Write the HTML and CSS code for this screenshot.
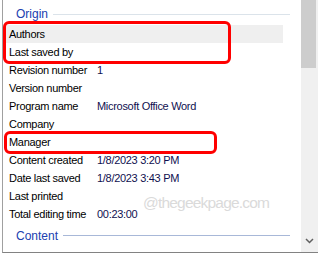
FILE: index.html
```html
<!DOCTYPE html>
<html lang="en">

<head>
    <meta charset="UTF-8">
    <title>Properties</title>
    <link rel="stylesheet" href="styles.css">
</head>

<body>
    <div class="panel">
        <div class="list">
            <div class="group-head"><span>Origin</span></div>
            <div class="prop selected"><span class="label">Authors</span><span class="value"></span></div>
            <div class="prop"><span class="label">Last saved by</span><span class="value"></span></div>
            <div class="prop"><span class="label">Revision number</span><span class="value">1</span></div>
            <div class="prop"><span class="label">Version number</span><span class="value"></span></div>
            <div class="prop"><span class="label">Program name</span><span class="value">Microsoft Office Word</span></div>
            <div class="prop"><span class="label">Company</span><span class="value"></span></div>
            <div class="prop"><span class="label">Manager</span><span class="value"></span></div>
            <div class="prop"><span class="label">Content created</span><span class="value">1/8/2023 3:20 PM</span></div>
            <div class="prop"><span class="label">Date last saved</span><span class="value">1/8/2023 3:43 PM</span></div>
            <div class="prop"><span class="label">Last printed</span><span class="value"></span></div>
            <div class="prop"><span class="label">Total editing time</span><span class="value">00:23:00</span></div>
            <div class="group-head content-head"><span>Content</span></div>
        </div>

        <div class="scrollbar">
            <div class="thumb"></div>
            <div class="arrow">
                <svg width="9" height="6" viewBox="0 0 9 6">
                    <path d="M1 1 L4.5 4.5 L8 1" fill="none" stroke="#606060" stroke-width="1.5" />
                </svg>
            </div>
        </div>

        <!-- highlight marks -->
        <div class="mark mark-authors"></div>
        <div class="mark mark-manager"></div>
        <div class="watermark">@thegeekpage.com</div>
    </div>
</body>

</html>
```

FILE: styles.css
```css
body {
    margin: 0;
    background: white;
    font-family: "Liberation Sans", Arial, sans-serif;
}

.panel {
    position: relative;
    display: flex;
    margin-left: 2px;
    width: 316px;
    height: 252px;
    border-left: 1px solid #a0a0a0;
    border-bottom: 1px solid #828282;
    box-sizing: content-box;
    overflow: hidden;
}

.list {
    width: 298px;
    font-size: 11px;
    letter-spacing: -0.3px;
}

.group-head {
    display: flex;
    align-items: center;
    height: 22px;
    padding-top: 3px;
    padding-left: 13px;
    padding-right: 11px;
    color: #2040b0;
    font-size: 12px;
    letter-spacing: 0;
}

.group-head::after {
    content: "";
    flex: 1;
    height: 1px;
    margin-left: 5px;
    background: #dbe3ea;
}

.content-head {
    height: 25px;
    padding-top: 0;
}

.content-head::after {
    background: #a8b8d8;
}

.prop {
    display: flex;
    align-items: center;
    height: 18px;
    margin-right: 18px;
    padding-left: 6px;
}

.prop.selected {
    background: #efefef;
}

.label {
    width: 88px;
    color: #000;
}

.value {
    color: #101050;
}

.scrollbar {
    display: flex;
    flex-direction: column;
    justify-content: space-between;
    width: 17px;
    background: #f0f0f0;
}

.thumb {
    width: 15px;
    height: 68px;
    background: #cdcdcd;
}

.arrow {
    display: flex;
    justify-content: center;
    height: 17px;
    padding-top: 3px;
    box-sizing: border-box;
}

.mark {
    position: absolute;
    border: 3px solid #ff0000;
    border-radius: 6px;
    box-sizing: border-box;
}

.mark-authors {
    left: 0;
    top: 21px;
    width: 228px;
    height: 43px;
}

.mark-manager {
    left: 1px;
    top: 131px;
    width: 213px;
    height: 23px;
}

.watermark {
    position: absolute;
    left: 140px;
    top: 194px;
    font-size: 15.5px;
    letter-spacing: -0.8px;
    color: #dadada;
}
```
